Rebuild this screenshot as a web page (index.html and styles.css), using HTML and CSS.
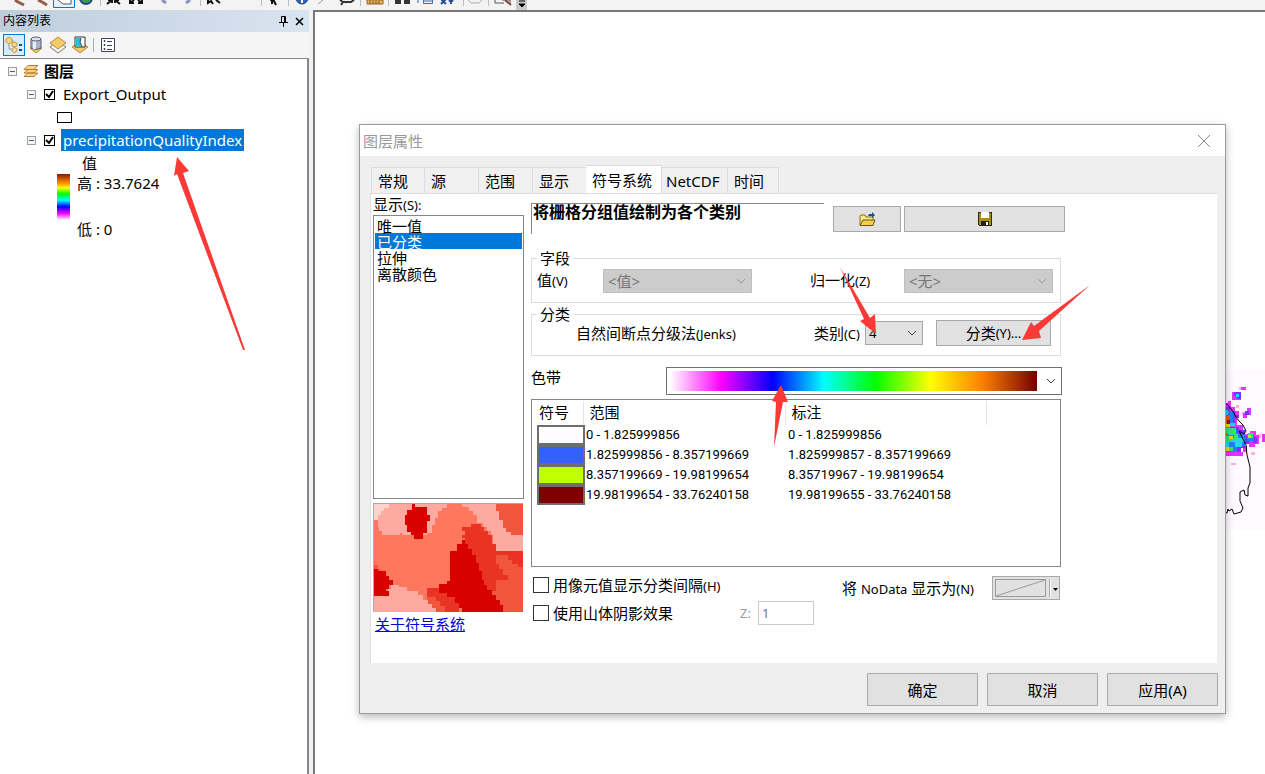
FILE: index.html
```html
<!DOCTYPE html>
<html lang="zh-CN">
<head>
    <meta charset="UTF-8">
    <meta name="viewport" content="width=device-width, initial-scale=1.0">
    <title>图层属性</title>
    <link rel="stylesheet" href="styles.css">
</head>
<body>
    <!-- Main toolbar, scrolled mostly out of view -->
    <div class="toolbar">
        <svg width="530" height="10" viewBox="0 0 530 10" fill="none">
            <path d="M15 0l3 2 6 3M38 0l4 2 5 3" stroke="#96594e" stroke-width="3"/>
            <path d="M53.500 0V7.500H74.500V0" fill="#e5f1fb" stroke="#0078d7"/>
            <path d="M58 0l5 4h8V0" fill="#fff" stroke="#555"/>
            <circle cx="86" cy="-2" r="6" fill="#3f9a56" stroke="#254c8c" stroke-width="2"/>
            <path d="M100.500 0V6M200.500 0V6M261.500 0V6M288.500 0V6M360.500 0V6M388.500 0V6M463.500 0V6M488.500 0V6" stroke="#bbb"/>
            <path d="M107 4l5-4M120 4l-5-4M108 0h4v3M119 0h-4v3M130 0v3h4M142 0v3h-4M130 3l4-3M142 3l-4-3" stroke="#111" stroke-width="2"/>
            <path d="M162 0l4 3M190 0l-4 3" stroke="#8895c4" stroke-width="3"/>
            <path d="M208 0v3l3-2 2 3M216 0l4 3M270 0l3-1 3 6M272 0v4" stroke="#111" stroke-width="2"/>
            <circle cx="302" cy="-2" r="6" fill="#2d62b8" stroke="#173e83"/>
            <path d="M302 -2v5" stroke="#fff" stroke-width="2"/>
            <path d="M318 4l5-4" stroke="#999"/>
            <path d="M340 0l3 2h8l3-2M343 2l-2 3" stroke="#333" stroke-width="2"/>
            <path d="M367 0h16v4h-16z" fill="#efb655" stroke="#a05c20"/>
            <path d="M370 1v3M373 1v3M376 1v3M379 1v3" stroke="#654"/>
            <path d="M395 0h6v4h-6zM404 0h6v4h-6z" fill="#333"/>
            <path d="M418 0v3M423.500 0V3.500H432.500V0M424 1h8" stroke="#3d6daa"/>
            <path d="M441 4l5-5M441 -1l5 5M451 0v4M449 0l2 2 2-2" stroke="#234f94" stroke-width="2"/>
            <path d="M468 0l3 3h8l3-3" stroke="#aaa"/>
            <path d="M495 0v3h9M502 0h8v4" stroke="#555"/>
            <path d="M505 0l6 5" stroke="#844" stroke-width="2"/>
            <path d="M516 0h11v10h-11z" fill="#c8c8c8"/>
            <path d="M519 1h6M519 4h6l-3 3z" fill="#000" stroke="#000"/>
        </svg>
    </div>

    <main class="workspace">
        <!-- Table of contents -->
        <aside class="contents">
            <header class="contents-title">
                <h2>内容列表</h2>
                <button class="plain-button" aria-label="固定">
                    <svg width="9" height="11" viewBox="0 0 9 11" fill="none" stroke="#000"><path d="M2.500 6V.5H6.500V6M0 6.500H9M4.500 7v4M5.500 1v5"/></svg>
                </button>
                <button class="plain-button" aria-label="关闭">
                    <svg width="9" height="9" viewBox="0 0 9 9" stroke="#000" stroke-width="1.500"><path d="M1 1l7 7M8 1L1 8"/></svg>
                </button>
            </header>
            <div class="contents-tools">
                <button class="tool-button active" aria-label="按绘制顺序列出">
                    <svg width="18" height="18" viewBox="0 0 18 18" fill="none">
                        <path d="M4 6v7h4M6 5h3" stroke="#999"/>
                        <path d="M1 3l3-2 3 2v3L4 8 1 6zM7 7l2-1 3 1v3l-3 1-2-1zM7 13l2-2 3 2v2l-3 2-2-2z" fill="#f6d98d" stroke="#c79a45"/>
                        <path d="M14 9h3M14 14h3" stroke="#174f8a" stroke-width="2"/>
                    </svg>
                </button>
                <button class="tool-button" aria-label="按源列出">
                    <svg width="16" height="18" viewBox="0 0 16 18">
                        <path d="M2 12h12l-6 5z" fill="#f3cb65" stroke="#b3852e"/>
                        <path d="M3 3v9q5 3 10 0V3" fill="#a9b3c5" stroke="#586174"/>
                        <path d="M5 4v9h3V4" fill="#e8edf5"/>
                        <ellipse cx="8" cy="3" rx="5" ry="2" fill="#dde3ec" stroke="#586174"/>
                    </svg>
                </button>
                <button class="tool-button" aria-label="按可见性列出">
                    <svg width="18" height="18" viewBox="0 0 18 18">
                        <path d="M1 11l8-5 8 5-8 6z" fill="#f4f4f4" stroke="#777"/>
                        <path d="M1 7l8-6 8 6-8 6z" fill="#f5c965" stroke="#b98b3d"/>
                    </svg>
                </button>
                <button class="tool-button" aria-label="按选择列出">
                    <svg width="18" height="18" viewBox="0 0 18 18">
                        <path d="M1 11l8-5 8 5-8 6z" fill="#f5c965" stroke="#b98b3d"/>
                        <path d="M4 1h10v10H4z" fill="#fff" stroke="#333"/>
                        <path d="M5 2h5l-1 4 1 4H5z" fill="#24bfe0"/>
                        <path d="M10 2l-1 4 2 5" fill="none" stroke="#174b70"/>
                    </svg>
                </button>
                <span class="tool-divider"></span>
                <button class="tool-button" aria-label="选项">
                    <svg width="14" height="16" viewBox="0 0 14 16" fill="none" stroke="#3b4360">
                        <path d="M.5 1.500h13v13H.5z" fill="#fff"/>
                        <path d="M6 4.500h5M6 8.500h5M6 12.500h5"/>
                        <path d="M3 3.500h1v1H3zM3 7.500h1v1H3zM3 11.500h1v1H3z"/>
                    </svg>
                </button>
            </div>
            <div class="tree">
                <div class="tree-row">
                    <button class="expander" aria-label="折叠 图层"></button>
                    <svg class="layers-icon" width="16" height="14" viewBox="0 0 16 14" fill="#f9d28b" stroke="#b67a2d">
                        <path d="M1 12.500L5 9h10l-4 3.500zM1 9L5 5.500h10L11 9zM1 5.500L5 1.500h10l-4 4z"/>
                    </svg>
                    <strong>图层</strong>
                </div>
                <div class="tree-row child">
                    <button class="expander" aria-label="折叠 Export_Output"></button>
                    <input class="tree-check" type="checkbox" id="layerExport" checked>
                    <label for="layerExport">Export_Output</label>
                </div>
                <div class="tree-row symbol-row"><span class="outline-symbol"></span></div>
                <div class="tree-row child">
                    <button class="expander" aria-label="折叠 precipitationQualityIndex"></button>
                    <input class="tree-check" type="checkbox" id="layerIndex" checked>
                    <label class="selected" for="layerIndex">precipitationQualityIndex</label>
                </div>
                <div class="tree-row value-row">值</div>
                <div class="legend">
                    <span class="legend-ramp"></span>
                    <div class="legend-labels">
                        <span>高 : 33.7624</span>
                        <span>低 : 0</span>
                    </div>
                </div>
            </div>
        </aside>

        <!-- Map view -->
        <section class="map">
            <svg class="map-data" width="40" height="160" viewBox="0 0 40 160" shape-rendering="crispEdges" fill="none">
                <path fill="#fffaff" d="M0 0h40v160H0z"/>
                <path fill="#ffb0e8" d="M14 17h3v3h-3zM6 93h5v2H6zM26 82h4v3h-4zM17 42h3v3h-3zM11 35h3v3h-3zM24 72h4v5h-4zM33 64h3v4h-3z"/>
                <path fill="#e433ff" d="M16 17h5v3h-5zM7 22h9v8H7zM0 33h3v-2h3v6h4v4h4v6h-2v8h6v6h-6v21h6v-6h4v6h-4v4H0zM18 43h4v-5h4v7h-4v3h-4zM19 64h6v-3h6v4h3v9h-4v3h-6v-3h-5zM37 64h3v8h-3z"/>
                <path fill="#7733ff" d="M9 22h7v7h-4v-3H9zM0 37h5v4h5v4h4v3h-4v6H0zM20 41h4v4h-4zM5 57h9v3h6v6h4v8h-4v4h-4v4H5zM28 67h4v6h-4zM15 74h5v3h-5z"/>
                <path fill="#277bff" d="M0 41h8v14H0zM0 60h12v22H0zM12 63h8v13h-8zM22 65h7v6h-7z"/>
                <path fill="#20d8e6" d="M0 40h3v5H0zM3 58h8v7H3zM7 68h12v4H7zM10 72h7v5h-7zM11 24h3v3h-3zM4 53h6v3H4zM0 72h4v5H0z"/>
                <path fill="#32e66b" d="M0 58h10v5H0zM0 66h7v6H0zM23 63h5v5h-5zM9 64h4v5H9zM3 77h5v4H3z"/>
                <path fill="#f4d522" d="M0 48h5v9H0zM0 77h4v4H0zM23 65h3v3h-3zM4 66h4v3H4z"/>
                <path fill="#e55a12" d="M0 46h5v8H0zM0 63h3v3H0z"/>
                <path fill="#a31313" d="M2 50h3v4H2z"/>
                <path stroke="#000" shape-rendering="auto" d="M0 33l3 2 3 4 3 4 2 4 3 4 4 4 3 6-2 3-5-3 3 6 4 8 1 10 3 12v16l-2 5v8l-3-1-1-5-4 2v9l3 7-2 4-7 2-2-5-3 2-1-2-1 4H0"/>
            </svg>
        </section>
    </main>

    <!-- Layer properties window -->
    <div class="dialog" role="dialog" aria-labelledby="dialogTitle">
        <header class="dialog-title">
            <h1 id="dialogTitle">图层属性</h1>
            <button class="plain-button" aria-label="关闭">
                <svg width="14" height="14" viewBox="0 0 14 14" stroke="#888"><path d="M1 1l12 12M13 1L1 13"/></svg>
            </button>
        </header>

        <nav class="tabs" role="tablist">
            <button class="tab" role="tab">常规</button>
            <button class="tab" role="tab">源</button>
            <button class="tab" role="tab">范围</button>
            <button class="tab" role="tab">显示</button>
            <button class="tab tab-active" role="tab" aria-selected="true">符号系统</button>
            <button class="tab tab-netcdf" role="tab">NetCDF</button>
            <button class="tab tab-time" role="tab">时间</button>
        </nav>

        <div class="panel">
            <div class="renderers">
                <label for="rendererList">显示<small>(S):</small></label>
                <select class="renderer-list" id="rendererList" size="5">
                    <option>唯一值</option>
                    <option selected>已分类</option>
                    <option>拉伸</option>
                    <option>离散颜色</option>
                </select>
                <svg class="preview" viewBox="24 25 450 327" preserveAspectRatio="none" shape-rendering="crispEdges">
                    <path fill="#ff775e" d="M24 25H474V352H24Z"/>
                    <path fill="#ffaaa0" d="M24 25H245V40H230V50H220V70H210V90H200V115H187V122H112V115H105V122H52V108H42V98H38V75H24ZM290 25H393V50H403V75H413V100H423V113H437V122H474V170H393V148H385V122H378V108H365V98H355V85H335V62H325V50H312V38H290ZM24 305H70V282H78V270H102V278H127V290H160V302H175V315H190V328H202V340H212V352H24Z"/>
                    <path fill="#ffd3cd" d="M24 25H72V40H57V50H48V62H40V75H24Z"/>
                    <path fill="#f1553b" d="M393 25H474V122H437V113H423V100H413V75H403V50H393ZM393 170H474V352H350V260H393ZM187 300H212V320H240V352H212V340H202V328H190V315H187ZM28 210H38V222H48V230H28Z"/>
                    <path fill="#ea3423" d="M292 98H318V88H348V98H357V108H370V122H380V148H393V290H380V352H300V130H290V122H300V110H292ZM393 170H474V218H460V208H440V195H430V182H393ZM393 207H403V222H415V240H428V255H393ZM187 280H222V295H247V308H270V325H282V352H240V335H225V320H212V308H187Z"/>
                    <path fill="#d90000" d="M142 28H150V38H187V62H194V80H187V115H175V133H148V122H138V113H127V92H120V62H127V45H142ZM290 137H300V148H310V163H320V180H333V205H343V230H350V255H358V270H367V285H380V302H393V317H405V330H413V352H292V340H282V325H270V308H247V295H222V268H245V258H255V170H275V148H290ZM24 222H40V230H62V245H72V257H83V270H72V282H62V290H72V305H24Z"/>
                    <path fill="none" stroke="#aaa" stroke-width="3" d="M25 352V26H474"/>
                </svg>
                <a class="about-link" href="#about">关于符号系统</a>
            </div>

            <div class="settings">
                <div class="heading-row">
                    <h3 class="heading">将栅格分组值绘制为各个类别</h3>
                    <button class="push-button import-button" aria-label="导入">
                        <svg width="17" height="16" viewBox="0 0 17 16">
                            <path d="M1 14V5l1-1h4l1 2h7v3" fill="#fbe98a" stroke="#8a6b10"/>
                            <path d="M1 14.500L4 9h12l-2 5.500z" fill="#f2ce4d" stroke="#6e5610"/>
                            <path d="M9 5l1-2h3V1l3 3-3 3V5z" fill="#17518f"/>
                        </svg>
                    </button>
                    <button class="push-button save-button" aria-label="保存">
                        <svg width="14" height="14" viewBox="0 0 14 14" shape-rendering="crispEdges">
                            <path d="M0 0h14v14H1l-1-1z" fill="#2c2812"/>
                            <path d="M1 1h12v12H1z" fill="#a98d24"/>
                            <path d="M3 0h8v6H3z" fill="#fff"/>
                            <path d="M3 9h8v5H3z" fill="#222"/>
                            <path d="M8 10h2v3H8z" fill="#fff"/>
                        </svg>
                    </button>
                </div>

                <fieldset class="group field-group">
                    <legend>字段</legend>
                    <label for="valueField">值<small>(V)</small></label>
                    <select class="combo wide" id="valueField" disabled><option>&lt;值&gt;</option></select>
                    <label class="norm-label" for="normField">归一化<small>(Z)</small></label>
                    <select class="combo wide" id="normField" disabled><option>&lt;无&gt;</option></select>
                </fieldset>

                <fieldset class="group class-group">
                    <legend>分类</legend>
                    <span class="method">自然间断点分级法<small>(Jenks)</small></span>
                    <label for="classCount">类别<small>(C)</small></label>
                    <select class="combo count" id="classCount"><option>4</option></select>
                    <button class="push-button classify-button">分类<small>(Y)...</small></button>
                </fieldset>

                <div class="ramp-row">
                    <label for="colorRamp">色带</label>
                    <select class="ramp" id="colorRamp"><option></option></select>
                </div>

                <div class="class-box">
                    <table class="classes">
                        <thead>
                            <tr><th class="col-symbol">符号</th><th class="col-range">范围</th><th class="col-label">标注</th></tr>
                        </thead>
                        <tbody>
                            <tr><td><span class="swatch white"></span></td><td>0 - 1.825999856</td><td>0 - 1.825999856</td></tr>
                            <tr><td><span class="swatch blue"></span></td><td>1.825999856 - 8.357199669</td><td>1.825999857 - 8.357199669</td></tr>
                            <tr><td><span class="swatch lime"></span></td><td>8.357199669 - 19.98199654</td><td>8.35719967 - 19.98199654</td></tr>
                            <tr><td><span class="swatch maroon"></span></td><td>19.98199654 - 33.76240158</td><td>19.98199655 - 33.76240158</td></tr>
                        </tbody>
                    </table>
                </div>

                <div class="options">
                    <div class="option-column">
                        <div class="option-row">
                            <input class="check" type="checkbox" id="cellBreaks">
                            <label for="cellBreaks">用像元值显示分类间隔<small>(H)</small></label>
                        </div>
                        <div class="option-row">
                            <input class="check" type="checkbox" id="hillshade">
                            <label for="hillshade">使用山体阴影效果</label>
                            <label class="z-label" for="zFactor">Z:</label>
                            <input class="z-input" type="text" id="zFactor" value="1" disabled>
                        </div>
                    </div>
                    <div class="nodata">
                        <label for="nodataColor">将 <small>NoData</small> 显示为<small>(N)</small></label>
                        <button class="nodata-button" id="nodataColor">
                            <svg width="66" height="22" viewBox="0 0 66 22" fill="none" stroke="#999">
                                <path d="M2.500 2.500h50v17h-50zM3 19L52 3"/>
                                <path d="M56.500 2v18" stroke="#aaa"/>
                                <path d="M57.500 2v18" stroke="#fff"/>
                                <path d="M60 11h5l-2.500 3z" fill="#000" stroke="none"/>
                            </svg>
                        </button>
                    </div>
                </div>
            </div>
        </div>

        <footer class="dialog-footer">
            <button class="push-button">确定</button>
            <button class="push-button">取消</button>
            <button class="push-button">应用(A)</button>
        </footer>
    </div>

    <!-- Red pointer arrows -->
    <svg class="arrows" fill="#fb3a38">
        <path d="M177 157L189 171L183 173L245 350L243 350L177 174L174 176Z"/>
        <path d="M840 267L870 318L875 314L876 334L860 321L864 319Z"/>
        <path d="M1090 285L1039 331L1041 338L1022 340L1031 322L1034 326Z"/>
        <path d="M781 385L788 402L783 402L774 447L776 402L772 401Z"/>
    </svg>
</body>
</html>
```
FILE: styles.css
```css
* {
    box-sizing: border-box;
}

body {
    margin: 0;
    min-height: 100vh;
    display: flex;
    flex-direction: column;
    overflow: hidden;
    background: #f0f0f0;
    color: #000;
    font-family: "Noto Sans", "Noto Sans CJK SC", sans-serif;
    font-size: 15px;
    line-height: 20px;
}

button,
input,
select {
    margin: 0;
    padding: 0;
    color: inherit;
    font: inherit;
}

small {
    font-size: 13px;
}

svg {
    display: block;
}

.plain-button {
    display: flex;
    border: none;
    background: none;
}

/* Toolbar and workspace */
.toolbar {
    height: 10px;
    overflow: hidden;
    background: #f3f3f3;
}

.workspace {
    flex: 1;
    display: flex;
    gap: 4px;
}

.map {
    flex: 1;
    position: relative;
    border-top: 2px solid #77797b;
    border-left: 2px solid #77797b;
    background: #fff;
}

.map-data {
    position: absolute;
    top: 358px;
    right: 0;
}

/* Table of contents */
.contents {
    width: 309px;
    display: flex;
    flex-direction: column;
}

.contents-title {
    height: 22px;
    display: flex;
    align-items: center;
    gap: 7px;
    padding: 0 5px 0 3px;
    background: linear-gradient(90deg, #bfcddb, #d9e4f1);
}

.contents-title h2 {
    flex: 1;
    margin: 0;
    font-size: 12px;
    font-weight: normal;
}

.contents-tools {
    height: 26px;
    display: flex;
    align-items: center;
    padding-left: 3px;
    background: #f5f5f5;
}

.tool-button {
    width: 22px;
    height: 22px;
    display: flex;
    align-items: center;
    justify-content: center;
    border: 1px solid transparent;
    background: none;
}

.tool-button.active {
    border-color: #0078d7;
    background: #d9ebf9;
}

.tool-divider {
    width: 1px;
    height: 14px;
    margin: 0 3px 0 2px;
    background: #aaa;
}

.tree {
    flex: 1;
    border-top: 1px solid #828790;
    border-right: 2px solid #828790;
    background: #fff;
}

.tree-row {
    height: 23px;
    display: flex;
    align-items: center;
    padding-left: 8px;
}

.tree-row.child {
    padding-left: 27px;
}

.tree-row.symbol-row {
    padding: 2px 0 0 57px;
}

.tree-row.value-row {
    padding-left: 82px;
}

.expander {
    width: 9px;
    height: 9px;
    margin-top: 2px;
    border: 1px solid #9a9fa8;
    background: linear-gradient(#4b5d8f, #4b5d8f) center / 5px 1px no-repeat #f5f5f5;
}

.layers-icon {
    margin: 0 5px 0 6px;
}

.tree-check {
    width: 11px;
    height: 11px;
    margin: 2px 6px 0 8px;
    appearance: none;
    border: 1px solid #000;
    background: #fff;
}

.tree-check:checked {
    background: url("data:image/svg+xml,%3Csvg xmlns='http://www.w3.org/2000/svg' viewBox='0 0 9 9'%3E%3Cpath d='M1 4l3 3 4-6' fill='none' stroke='%23000' stroke-width='2'/%3E%3C/svg%3E");
}

.tree-row label {
    padding: 1px 2px;
}

.tree-row .selected {
    background: #0078d7;
    color: #fff;
}

.outline-symbol {
    width: 15px;
    height: 11px;
    border: 1px solid #000;
}

.legend {
    display: flex;
    gap: 7px;
    padding-left: 57px;
}

.legend-ramp {
    width: 13px;
    height: 46px;
    background: linear-gradient(#802000, #ff8000 18%, #ffff00 30%, #00ff00 43%, #00ffff 57%, #0000ff 71%, #ff00ff 86%, #fff);
}

.legend-labels {
    height: 64px;
    display: flex;
    flex-direction: column;
    justify-content: space-between;
    line-height: 18px;
}

/* Dialog window */
.dialog {
    position: absolute;
    top: 124px;
    left: 359px;
    width: 867px;
    border: 1px solid #9b9b9b;
    background: #efefef;
    box-shadow: 0 3px 8px rgba(0, 0, 0, 0.28);
}

.dialog-title {
    height: 31px;
    display: flex;
    align-items: center;
    justify-content: space-between;
    padding: 0 14px 0 3px;
    background: #fff;
}

.dialog-title h1 {
    margin: 0;
    color: #999;
    font-size: 15px;
    font-weight: normal;
}

.tabs {
    height: 37px;
    display: flex;
    align-items: flex-end;
    padding-left: 11px;
}

.tab {
    width: 54px;
    height: 26px;
    padding-left: 6px;
    border: 1px solid #dcdcdc;
    border-width: 1px 1px 0 0;
    background: #f0f0f0;
    text-align: left;
}

.tab:first-child {
    border-left-width: 1px;
}

.tab-active {
    width: 76px;
    height: 28px;
    margin-left: -1px;
    background: #fff;
}

.tab-netcdf {
    width: 66px;
    padding-left: 4px;
}

.tab-time {
    width: 51px;
}

.panel {
    height: 470px;
    display: flex;
    gap: 7px;
    margin: 0 8px 0 10px;
    padding-left: 2px;
    border-top: 1px solid #dcdcdc;
    border-left: 1px solid #e0e0e0;
    background: #fff;
}

/* Renderer list on the left */
.renderers {
    width: 151px;
    display: flex;
    flex-direction: column;
}

.renderer-list {
    height: 284px;
    padding: 1px;
    border: 1px solid #828790;
    border-radius: 0;
    outline: none;
    background: #fff;
}

.renderer-list option {
    display: flex;
    align-items: center;
    min-height: 16px;
    height: 16px;
    padding: 0 2px;
    color: #000;
}

.renderer-list option:checked {
    background: linear-gradient(#0078d7, #0078d7);
    color: #fff;
}

.preview {
    width: 150px;
    height: 109px;
    margin-top: 4px;
}

.about-link {
    margin: 2px;
    color: #0000e0;
}

/* Settings on the right */
.settings {
    width: 534px;
    padding-top: 9px;
}

.heading-row {
    height: 46px;
    display: flex;
    align-items: flex-start;
}

.heading {
    width: 293px;
    height: 31px;
    margin: 0 9px 0 0;
    padding-left: 1px;
    border-top: 1px solid #888;
    border-left: 1px solid #888;
    font-size: 16px;
    line-height: 16px;
}

.push-button {
    display: flex;
    align-items: center;
    justify-content: center;
    border: 1px solid #a9a9a9;
    background: #e1e1e1;
}

.import-button {
    width: 68px;
    height: 26px;
    margin: 3px 3px 0 0;
}

.save-button {
    width: 161px;
    height: 26px;
    margin-top: 3px;
}

.group {
    display: flex;
    align-items: center;
    width: 530px;
    min-width: 0;
    margin: 0;
    padding: 0 7px 0 5px;
    border: 1px solid #dcdcdc;
}

.group legend {
    padding: 0 3px;
    line-height: 18px;
}

.field-group {
    height: 54px;
    padding-bottom: 8px;
}

.field-group label {
    width: 66px;
}

.field-group .norm-label {
    width: 94px;
    margin-left: 58px;
}

.class-group {
    height: 51px;
    margin-top: 2px;
    padding-right: 9px;
    padding-bottom: 12px;
}

.method {
    flex: 1;
    padding-left: 39px;
}

.combo {
    height: 24px;
    padding: 0 4px;
    appearance: none;
    border: 1px solid #a9a9a9;
    border-radius: 0;
    background: url("data:image/svg+xml,%3Csvg xmlns='http://www.w3.org/2000/svg' width='10' height='6'%3E%3Cpath d='M1 1l4 4 4-4' fill='none' stroke='%23444'/%3E%3C/svg%3E") right 5px center no-repeat #e1e1e1;
}

.combo:disabled {
    border-color: #bfbfbf;
    background: url("data:image/svg+xml,%3Csvg xmlns='http://www.w3.org/2000/svg' width='10' height='6'%3E%3Cpath d='M1 1l4 4 4-4' fill='none' stroke='%23999'/%3E%3C/svg%3E") right 5px center no-repeat #ccc;
    color: #777;
    opacity: 1;
}

.wide {
    width: 149px;
}

.count {
    width: 58px;
    margin: 0 13px 0 5px;
    padding: 0 3px;
    font-size: 13px;
}

.classify-button {
    width: 115px;
    height: 26px;
}

.ramp-row {
    display: flex;
    align-items: flex-start;
    justify-content: space-between;
    width: 531px;
    margin-top: 11px;
}

.ramp {
    width: 396px;
    height: 28px;
    appearance: none;
    border: 1px solid #707070;
    border-radius: 0;
    background:
        url("data:image/svg+xml,%3Csvg xmlns='http://www.w3.org/2000/svg' width='10' height='6'%3E%3Cpath d='M1 1l4 4 4-4' fill='none' stroke='%23444'/%3E%3C/svg%3E") right 5px center no-repeat,
        linear-gradient(90deg, #fff, #ff00ff 14%, #0000ff 28%, #00ffff 42%, #00ff00 56%, #ffff00 71%, #ff8000 85%, #730000) 3px center / 367px 20px no-repeat,
        #fff;
}

/* Class breaks table */
.class-box {
    width: 530px;
    height: 168px;
    margin-top: 4px;
    padding: 1px 5px;
    border: 1px solid #828790;
}

.classes {
    border-collapse: collapse;
    table-layout: fixed;
    width: 450px;
}

.classes th {
    height: 24px;
    padding: 0 0 2px 6px;
    border-right: 1px solid #e5e5e5;
    font-weight: normal;
    text-align: left;
}

.classes .col-symbol {
    width: 46px;
    padding-left: 2px;
}

.col-range {
    width: 202px;
}

.classes td {
    height: 20px;
    padding: 0 0 0 3px;
    font-family: Roboto, sans-serif;
    font-size: 13px;
    line-height: 20px;
}

.classes td:first-child {
    padding: 0;
}

.swatch {
    display: block;
    width: 48px;
    height: 20px;
    border: 2px solid #6e6e6e;
}

.swatch.white {
    background: #fffcff;
}

.swatch.blue {
    background: #3361ff;
}

.swatch.lime {
    background: #bfff00;
}

.swatch.maroon {
    background: #800000;
}

/* Options under the table */
.options {
    display: flex;
    justify-content: space-between;
    width: 529px;
    padding: 4px 0 0 2px;
}

.option-row {
    height: 28px;
    display: flex;
    align-items: center;
}

.check {
    width: 16px;
    height: 16px;
    margin-right: 4px;
    appearance: none;
    border: 1px solid #333;
    background: #fff;
}

.z-label {
    margin: 0 7px 0 67px;
    color: #999;
    font-size: 13px;
}

.z-input {
    width: 56px;
    height: 24px;
    padding: 0 3px;
    border: 1px solid #ccc;
    background: #fff;
    color: #777;
    font-size: 13px;
}

.nodata {
    height: 34px;
    display: flex;
    align-items: center;
    gap: 18px;
}

.nodata-button {
    width: 68px;
    height: 24px;
    border: 1px solid #a9a9a9;
    background: #e1e1e1;
}

.dialog-footer {
    display: flex;
    justify-content: flex-end;
    gap: 9px;
    padding: 10px 7px 7px;
}

.dialog-footer .push-button {
    width: 111px;
    height: 33px;
}

/* Arrows sit over everything */
.arrows {
    position: absolute;
    top: 0;
    left: 0;
    width: 100%;
    height: 100%;
    pointer-events: none;
}
```
